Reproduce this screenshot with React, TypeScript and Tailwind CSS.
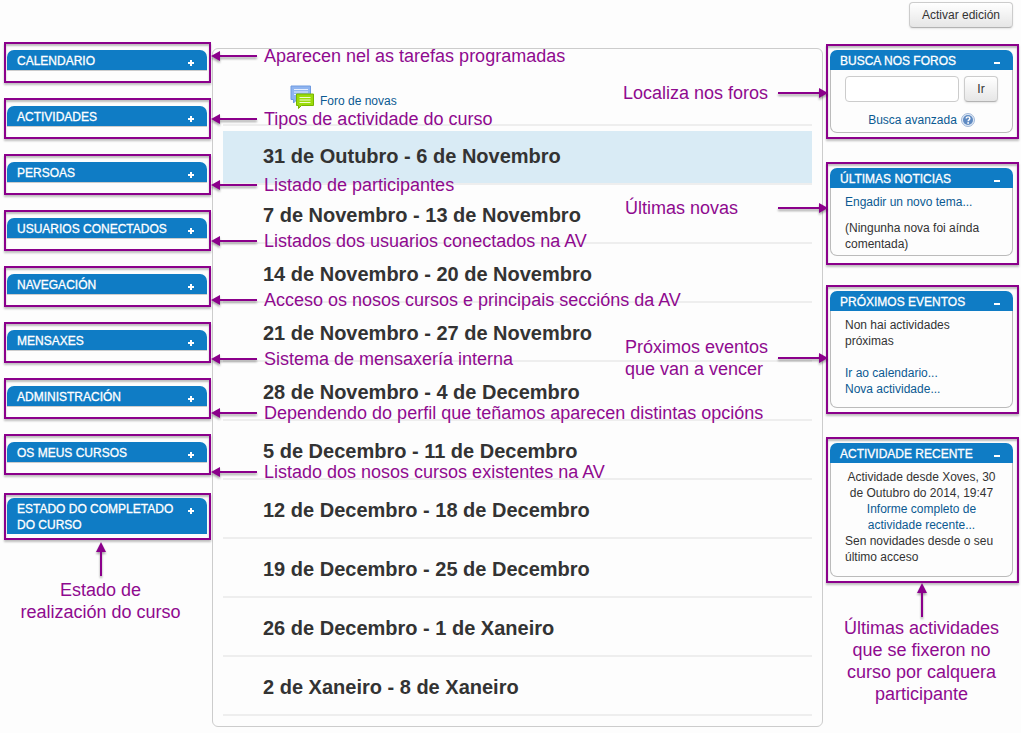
import type { ReactNode } from 'react';

const leftBlocks = [
  { title: 'CALENDARIO', note: 'Aparecen nel as tarefas programadas', top: 'top-[1px]' },
  { title: 'ACTIVIDADES', note: 'Tipos de actividade do curso', top: 'top-[8px]' },
  { title: 'PERSOAS', note: 'Listado de participantes', top: 'top-[18px]' },
  { title: 'USUARIOS CONECTADOS', note: 'Listados dos usuarios conectados na AV', top: 'top-[18px]' },
  { title: 'NAVEGACIÓN', note: 'Acceso os nosos cursos e principais seccións da AV', top: 'top-[21px]' },
  { title: 'MENSAXES', note: 'Sistema de mensaxería interna', top: 'top-[24px]' },
  { title: 'ADMINISTRACIÓN', note: 'Dependendo do perfil que teñamos aparecen distintas opcións', top: 'top-[22px]' },
  { title: 'OS MEUS CURSOS', note: 'Listado dos nosos cursos existentes na AV', top: 'top-[25px]' },
];

const weeks = [
  '31 de Outubro - 6 de Novembro',
  '7 de Novembro - 13 de Novembro',
  '14 de Novembro - 20 de Novembro',
  '21 de Novembro - 27 de Novembro',
  '28 de Novembro - 4 de Decembro',
  '5 de Decembro - 11 de Decembro',
  '12 de Decembro - 18 de Decembro',
  '19 de Decembro - 25 de Decembro',
  '26 de Decembro - 1 de Xaneiro',
  '2 de Xaneiro - 8 de Xaneiro',
];

const frame =
  'relative border-2 border-[#8b008b] shadow-[0_2px_2px_rgba(0,0,0,0.25),inset_0_2px_2px_rgba(0,0,0,0.25)]';
const noteText = 'text-[18px] leading-[22px] text-[#8f0a8f]';

function ArrowLeft() {
  return (
    <svg width="46" height="14" viewBox="0 0 46 14" className="shrink-0 drop-shadow-[0_2px_1px_rgba(0,0,0,0.35)]" aria-hidden="true">
      <path d="M8 7H46" stroke="#8b008b" strokeWidth="2" />
      <path d="M0 7L9 2V12Z" fill="#8b008b" />
    </svg>
  );
}

function ArrowRight() {
  return (
    <svg width="50" height="14" viewBox="0 0 50 14" className="shrink-0 drop-shadow-[0_2px_1px_rgba(0,0,0,0.35)]" aria-hidden="true">
      <path d="M0 7H42" stroke="#8b008b" strokeWidth="2" />
      <path d="M50 7L41 2V12Z" fill="#8b008b" />
    </svg>
  );
}

function ArrowUp() {
  return (
    <svg width="14" height="34" viewBox="0 0 14 34" className="drop-shadow-[0_2px_1px_rgba(0,0,0,0.35)]" aria-hidden="true">
      <path d="M7 8V34" stroke="#8b008b" strokeWidth="2" />
      <path d="M7 0L2 10H12Z" fill="#8b008b" />
    </svg>
  );
}

function BlockHeader({ title, open }: { title: string; open?: boolean }) {
  return (
    <div className="flex items-start justify-between rounded-t-[7px] bg-[#0f7cc5] pr-[13px] pl-[10px]">
      <h2 className="pt-[3px] pb-px text-[12px] leading-[16px] text-white [-webkit-text-stroke:0.3px_white]">{title}</h2>
      <button type="button" aria-label={open ? 'Agochar' : 'Amosar'} className="mt-[10px]">
        <svg width="6" height="6" viewBox="0 0 6 6" aria-hidden="true">
          {open ? <path d="M0 3H6" stroke="#fff" strokeWidth="2" /> : <path d="M0 3H6M3 0V6" stroke="#fff" strokeWidth="2" />}
        </svg>
      </button>
    </div>
  );
}

type SideBlockProps = {
  title: string;
  note?: ReactNode;
  notePlace?: string;
  spacing?: string;
  children: ReactNode;
};

function SideBlock({ title, note, notePlace, spacing = 'pb-[4px]', children }: SideBlockProps) {
  return (
    <section className={`${frame} pt-[4px] pr-[4px] pl-[2px] ${spacing}`}>
      <BlockHeader title={title} open />
      <div className="rounded-b-[7px] border border-t-0 border-[#bbb] px-[14px] pt-[6px]">{children}</div>
      {note && (
        <div className={`absolute right-full flex items-center justify-between ${notePlace}`}>
          <p className={`whitespace-nowrap ${noteText}`}>{note}</p>
          <ArrowRight />
        </div>
      )}
    </section>
  );
}

function ForumIcon() {
  return (
    <svg width="24" height="24" viewBox="0 0 24 24" aria-hidden="true">
      <path d="M1 1H20.500V14.500H7L3.500 18V14.500H1Z" fill="#8fb4f0" stroke="#6f9ae0" />
      <path d="M4 4.500H18M4 7H18M4 9.500H18" stroke="#e6effd" />
      <path d="M6.500 9H23.500V20.500H11.500L8.500 23.500V20.500H6.500Z" fill="#9bdc0a" stroke="#78b400" />
      <path d="M9.500 12.500H20.500M9.500 15H20.500M9.500 17.500H20.500" stroke="#f0fbcf" />
    </svg>
  );
}

function HelpIcon() {
  return (
    <svg width="14" height="14" viewBox="0 0 14 14" aria-hidden="true">
      <circle cx="7" cy="7" r="6.500" fill="#dfe9f5" stroke="#a3b9d8" />
      <circle cx="7" cy="7" r="5" fill="#5f8ac2" />
      <path d="M5.200 5.600C5.200 3.300 8.900 3.400 8.900 5.500C8.900 6.900 7.100 6.800 7.100 8.300" fill="none" stroke="#fff" strokeWidth="1.400" />
      <circle cx="7.100" cy="10" r="0.900" fill="#fff" />
    </svg>
  );
}

const buttonStyle =
  'rounded-[4px] border border-[#ccc] border-b-[#b3b3b3] bg-linear-to-b from-white to-[#e6e6e6] text-[12px] leading-[16px] text-[#333] shadow-[0_1px_2px_rgba(0,0,0,0.1)]';
const link = 'text-[#0b5a92]';

export default function App() {
  return (
    <div className="min-h-screen bg-[#fdfdfd] pb-[6px] font-['Liberation_Sans',Arial,sans-serif] text-[12px] leading-[16px] text-[#333]">
      <header className="flex h-[42px] justify-end pt-[2px] pr-[8px]">
        <button type="button" className={`h-[26px] px-[12px] ${buttonStyle}`}>
          Activar edición
        </button>
      </header>

      <div className="flex items-start pr-[2px] pl-[4px]">
        {/* Left column: collapsed blocks */}
        <aside className="flex w-[207px] shrink-0 flex-col gap-[15px]">
          {leftBlocks.map((block) => (
            <section key={block.title} className={`${frame} h-[41px] pt-[6px] pr-[2px] pl-px`}>
              <div className="border-b border-[#ccc]">
                <BlockHeader title={block.title} />
              </div>
              <div className={`absolute left-full z-10 ml-[2px] flex items-center gap-[7px] ${block.top}`}>
                <ArrowLeft />
                <p className={`whitespace-nowrap ${noteText}`}>{block.note}</p>
              </div>
            </section>
          ))}
          <div className="pt-[3px]">
            <section className={`${frame} pt-[3px] pr-[2px] pb-[4px] pl-px`}>
              <BlockHeader title="ESTADO DO COMPLETADO DO CURSO" />
            </section>
            <div className="flex flex-col items-center pt-[2px] pr-[14px]">
              <ArrowUp />
              <p className={`pt-[3px] text-center ${noteText}`}>
                Estado de
                <br />
                realización do curso
              </p>
            </div>
          </div>
        </aside>

        {/* Course weeks */}
        <main className="mt-[6px] mr-[3px] ml-px min-w-0 flex-1 rounded-[6px] border border-[#ccc] px-[10px] pb-[10px]">
          <div className="flex h-[77px] items-end border-b-2 border-[#eee] pb-[15px] pl-[67px]">
            <a href="#foro" className={`flex items-end gap-[6px] ${link}`}>
              <ForumIcon />
              Foro de novas
            </a>
          </div>
          <ul>
            {weeks.map((week, i) => (
              <li
                key={week}
                className={`mt-[5px] flex h-[54px] items-center border-b-2 border-[#eee] pb-[2px] pl-[40px] ${i === 0 ? 'bg-[#d9ebf5]' : ''}`}
              >
                <h3 className="text-[20px] leading-[24px] font-bold">{week}</h3>
              </li>
            ))}
          </ul>
        </main>

        {/* Right column: open blocks */}
        <aside className="mt-[2px] flex w-[193px] shrink-0 flex-col gap-[20px]">
          <SideBlock title="BUSCA NOS FOROS" note="Localiza nos foros" notePlace="top-[36px] w-[205px]" spacing="mb-[3px] pb-[4px]">
            <form className="flex gap-[5px]" onSubmit={(e) => e.preventDefault()}>
              <input
                type="text"
                aria-label="Busca nos foros"
                className="h-[26px] w-[114px] rounded-[4px] border border-[#ccc] bg-white px-[6px]"
              />
              <button type="submit" className={`h-[26px] w-[35px] ${buttonStyle}`}>
                Ir
              </button>
            </form>
            <div className="flex items-center justify-center gap-[4px] pt-[10px] pb-[4px]">
              <a href="#avanzada" className={link}>
                Busca avanzada
              </a>
              <HelpIcon />
            </div>
          </SideBlock>

          <SideBlock title="ÚLTIMAS NOTICIAS" note="Últimas novas" notePlace="top-[33px] w-[203px]" spacing="pb-[7px]">
            <a href="#tema" className={`block ${link}`}>
              Engadir un novo tema...
            </a>
            <p className="pt-[10px] pb-[3px]">(Ningunha nova foi aínda comentada)</p>
          </SideBlock>

          <SideBlock
            title="PRÓXIMOS EVENTOS"
            note={
              <>
                Próximos eventos
                <br />
                que van a vencer
              </>
            }
            notePlace="top-[49px] w-[203px]"
            spacing="mb-[3px] pb-[4px]"
          >
            <p className="w-[120px]">Non hai actividades próximas</p>
            <div className="flex flex-col items-start pt-[16px] pb-[10px]">
              <a href="#calendario" className={link}>
                Ir ao calendario...
              </a>
              <a href="#nova" className={link}>
                Nova actividade...
              </a>
            </div>
          </SideBlock>

          <div>
            <SideBlock title="ACTIVIDADE RECENTE">
              <div className="text-center">
                <p>
                  Actividade desde Xoves, 30
                  <br />
                  de Outubro do 2014, 19:47
                </p>
                <a href="#informe" className={`block ${link}`}>
                  Informe completo de
                  <br />
                  actividade recente...
                </a>
              </div>
              <p className="pb-[11px]">
                Sen novidades desde o seu
                <br />
                último acceso
              </p>
            </SideBlock>
            <div className="flex flex-col items-center pr-[2px]">
              <ArrowUp />
              <p className={`text-center ${noteText}`}>
                Últimas actividades
                <br />
                que se fixeron no
                <br />
                curso por calquera
                <br />
                participante
              </p>
            </div>
          </div>
        </aside>
      </div>
    </div>
  );
}
